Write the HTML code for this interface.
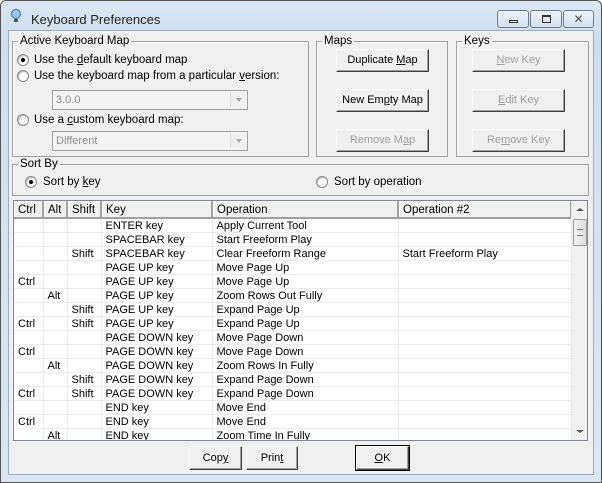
<!DOCTYPE html><html><head><style>
*{margin:0;padding:0;box-sizing:border-box}
body{width:602px;height:483px;overflow:hidden;font-family:"Liberation Sans",sans-serif;font-size:11px;color:#000;background:#fff}
.win{position:absolute;left:0;top:0;width:602px;height:483px;background:linear-gradient(#dbe7f4,#cfdeef 40px,#dae6f3);border:1px solid #555;border-radius:6px 6px 0 0}
.client{position:absolute;left:8px;top:30px;width:586px;height:445px;background:#f0f0f0;border:1px solid #a0acba}
.a{position:absolute;white-space:nowrap}
.grp{position:absolute;border:1px solid #a0a0a0;box-shadow:1px 1px 0 #fff inset}
.gl{position:absolute;background:#f0f0f0;padding:0 2px;top:-7px;left:5px;font-size:11.5px;line-height:13px}
.btn{position:absolute;background:#f0f0f0;border:1px solid;border-color:#fff #404040 #404040 #fff;box-shadow:inset -1px -1px 0 #a0a0a0;text-align:center;line-height:21px;font-size:11px}
.dis{color:#a0a0a0}
.rad{position:absolute;width:12px;height:12px;border-radius:50%;background:#fff;border:1px solid #888;box-shadow:inset 1px 1px 1px #bbb}
.rad.on::after{content:"";position:absolute;left:3px;top:3px;width:4px;height:4px;border-radius:50%;background:#000}
.cb{position:absolute;border:1px solid #a0a0a0;background:#f4f4f4;color:#8c8c8c;padding-left:3px;line-height:18px;font-size:11px}
.cb::after{content:"";position:absolute;right:1px;top:1px;width:15px;height:15px;background:#f0f0f0;border-left:1px solid #ddd}
.cb b{position:absolute;right:5px;top:7px;border:3px solid transparent;border-top:4px solid #aaa;z-index:2}
.t{position:absolute;font-size:11.5px;line-height:14px}
u{text-decoration:underline}
table{border-collapse:collapse;position:absolute;font-size:11px}
td{height:14px;border-right:1px solid #ececec;border-bottom:1px solid #ececec;padding:1px 4px 0;line-height:12px;white-space:nowrap;overflow:hidden}
th{height:17px;font-weight:normal;text-align:left;padding:1px 4px 0;border-right:2px solid #a0a0a0;border-bottom:2px solid #a0a0a0;background:#f0f0f0;font-size:11.5px;box-shadow:inset 1px 1px 0 #fff}
</style></head><body>
<div class="win">
<svg class="a" style="left:9px;top:8px" width="12" height="16"><circle cx="6" cy="5" r="4.5" fill="#9cc7f0" stroke="#2b6cc4"/><rect x="4" y="10" width="4" height="3" fill="#555"/></svg>
<div class="a" style="left:30px;top:11px;font-size:13px;color:#222">Keyboard Preferences</div>
<div class="a" style="left:496px;top:9px;width:32px;height:18px;border:1px solid #6d7c8f;border-radius:3px;background:linear-gradient(#eef3f9,#d4e0ee)"><div style="position:absolute;left:11px;top:9px;width:9px;height:3px;border:1px solid #333"></div></div>
<div class="a" style="left:529px;top:9px;width:32px;height:18px;border:1px solid #6d7c8f;border-radius:3px;background:linear-gradient(#eef3f9,#d4e0ee)"><div style="position:absolute;left:11px;top:4px;width:9px;height:8px;border:1px solid #333;border-top-width:2px"></div></div>
<div class="a" style="left:562px;top:9px;width:31px;height:18px;border:1px solid #6d7c8f;border-radius:3px;background:linear-gradient(#eef3f9,#d4e0ee);text-align:center;line-height:16px;font-size:12px;color:#555">✕</div>
</div>
<div class="client"></div>

<div class="grp" style="left:12px;top:41px;width:297px;height:116px"><span class="gl">Active Keyboard Map</span></div>
<div class="rad on" style="left:17px;top:54px"></div><div class="t" style="left:34px;top:53px">Use the <u>d</u>efault keyboard map</div>
<div class="rad" style="left:17px;top:70px"></div><div class="t" style="left:34px;top:69px">Use the keyboard map from a particular <u>v</u>ersion:</div>
<div class="cb" style="left:52px;top:90px;width:196px;height:20px">3.0.0<b></b></div>
<div class="rad" style="left:17px;top:114px"></div><div class="t" style="left:34px;top:113px">Use a <u>c</u>ustom keyboard map:</div>
<div class="cb" style="left:52px;top:131px;width:196px;height:20px">Different<b></b></div>

<div class="grp" style="left:316px;top:41px;width:132px;height:116px"><span class="gl">Maps</span></div>
<div class="btn" style="left:336px;top:49px;width:93px;height:23px">Duplicate <u>M</u>ap</div>
<div class="btn" style="left:336px;top:89px;width:93px;height:23px">New Em<u>p</u>ty Map</div>
<div class="btn dis" style="left:336px;top:129px;width:93px;height:23px">Remove M<u>a</u>p</div>

<div class="grp" style="left:456px;top:41px;width:133px;height:116px"><span class="gl">Keys</span></div>
<div class="btn dis" style="left:472px;top:49px;width:93px;height:23px"><u>N</u>ew Key</div>
<div class="btn dis" style="left:472px;top:89px;width:93px;height:23px"><u>E</u>dit Key</div>
<div class="btn dis" style="left:472px;top:129px;width:93px;height:23px">Re<u>m</u>ove Key</div>

<div class="grp" style="left:12px;top:164px;width:577px;height:32px"><span class="gl">Sort By</span></div>
<div class="rad on" style="left:25px;top:176px"></div><div class="t" style="left:43px;top:175px">Sort by <u>k</u>ey</div>
<div class="rad" style="left:316px;top:176px"></div><div class="t" style="left:334px;top:175px">Sort by operation</div>

<div class="a" style="left:13px;top:200px;width:575px;height:241px;border:1px solid #828790;background:#fff;overflow:hidden">
<table style="left:0;top:0;table-layout:fixed;width:557px">
<colgroup><col style="width:29px"><col style="width:24px"><col style="width:34px"><col style="width:111px"><col style="width:186px"><col style="width:173px"></colgroup>
<tr><th>Ctrl</th><th>Alt</th><th>Shift</th><th>Key</th><th>Operation</th><th>Operation #2</th></tr>
<tr><td></td><td></td><td></td><td>ENTER key</td><td>Apply Current Tool</td><td></td></tr>
<tr><td></td><td></td><td></td><td>SPACEBAR key</td><td>Start Freeform Play</td><td></td></tr>
<tr><td></td><td></td><td>Shift</td><td>SPACEBAR key</td><td>Clear Freeform Range</td><td>Start Freeform Play</td></tr>
<tr><td></td><td></td><td></td><td>PAGE UP key</td><td>Move Page Up</td><td></td></tr>
<tr><td>Ctrl</td><td></td><td></td><td>PAGE UP key</td><td>Move Page Up</td><td></td></tr>
<tr><td></td><td>Alt</td><td></td><td>PAGE UP key</td><td>Zoom Rows Out Fully</td><td></td></tr>
<tr><td></td><td></td><td>Shift</td><td>PAGE UP key</td><td>Expand Page Up</td><td></td></tr>
<tr><td>Ctrl</td><td></td><td>Shift</td><td>PAGE UP key</td><td>Expand Page Up</td><td></td></tr>
<tr><td></td><td></td><td></td><td>PAGE DOWN key</td><td>Move Page Down</td><td></td></tr>
<tr><td>Ctrl</td><td></td><td></td><td>PAGE DOWN key</td><td>Move Page Down</td><td></td></tr>
<tr><td></td><td>Alt</td><td></td><td>PAGE DOWN key</td><td>Zoom Rows In Fully</td><td></td></tr>
<tr><td></td><td></td><td>Shift</td><td>PAGE DOWN key</td><td>Expand Page Down</td><td></td></tr>
<tr><td>Ctrl</td><td></td><td>Shift</td><td>PAGE DOWN key</td><td>Expand Page Down</td><td></td></tr>
<tr><td></td><td></td><td></td><td>END key</td><td>Move End</td><td></td></tr>
<tr><td>Ctrl</td><td></td><td></td><td>END key</td><td>Move End</td><td></td></tr>
<tr><td></td><td>Alt</td><td></td><td>END key</td><td>Zoom Time In Fully</td><td></td></tr>
</table>
<div class="a" style="left:557px;top:0;width:17px;height:239px;background:#f0f0f0;border-left:1px solid #e6e6e6">
<div class="a" style="left:4px;top:7px;border:4px solid transparent;border-bottom:3px solid #555;border-top:0"></div>
<div class="a" style="left:1px;top:18px;width:14px;height:27px;border:1px solid #9a9a9a;border-radius:2px;background:linear-gradient(90deg,#f3f3f3,#dcdcdc)"><div style="margin:9px 3px;height:7px;border-top:1px solid #777;border-bottom:1px solid #777;"></div></div>
<div class="a" style="left:4px;top:229px;border:4px solid transparent;border-top:3px solid #555;border-bottom:0"></div>
</div>
</div>

<div class="btn" style="left:189px;top:446px;width:53px;height:24px;line-height:22px">Cop<u>y</u></div>
<div class="btn" style="left:246px;top:446px;width:52px;height:24px;line-height:22px">Prin<u>t</u></div>
<div class="btn" style="left:356px;top:446px;width:53px;height:24px;line-height:22px;outline:1px solid #000"><u>O</u>K</div>
</body></html>
